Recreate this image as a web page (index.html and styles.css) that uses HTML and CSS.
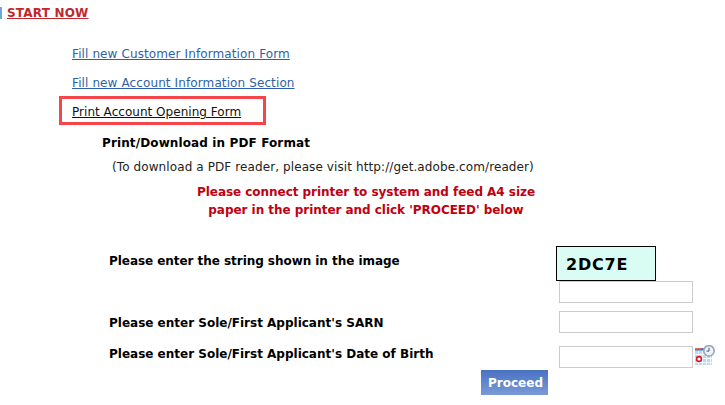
FILE: index.html
```html
<!DOCTYPE html>
<html lang="en">
<head>
<meta charset="utf-8">
<title>Start Now</title>
<link rel="stylesheet" href="styles.css">
</head>
<body>
<div class="page">
  <header class="head">
    <span class="head-mark"></span>
    <a class="start" href="#">START NOW</a>
  </header>
  <nav class="links">
    <a class="link" href="#">Fill new Customer Information Form</a>
    <a class="link" href="#">Fill new Account Information Section</a>
    <div class="current"><a class="link-current" href="#">Print Account Opening Form</a></div>
  </nav>
  <h2 class="title">Print/Download in PDF Format</h2>
  <p class="note">(To download a PDF reader, please visit http://get.adobe.com/reader)</p>
  <p class="warn">Please connect printer to system and feed A4 size<br>paper in the printer and click 'PROCEED' below</p>
  <form class="form">
    <div class="row row-captcha">
      <label class="label label-captcha">Please enter the string shown in the image</label>
      <div class="fields">
        <div class="captcha">2DC7E</div>
        <input class="input" type="text">
      </div>
    </div>
    <div class="row row-sarn">
      <label class="label">Please enter Sole/First Applicant's SARN</label>
      <input class="input" type="text">
    </div>
    <div class="row row-dob">
      <label class="label">Please enter Sole/First Applicant's Date of Birth</label>
      <div class="date">
        <input class="input" type="text">
        <svg class="cal" width="22" height="21" viewBox="0 0 22 21" aria-hidden="true">
          <rect x="1" y="3" width="17" height="17" fill="#bcd9f4"/>
          <rect x="1" y="3" width="17" height="2.5" fill="#4f7cc8"/>
          <rect x="1" y="3" width="6" height="1" fill="#d9735a"/>
          <path d="M1 9.5H18M1 13.5H18M1 17.5H18M4.5 6V20M8.5 6V20M12.5 6V20M16.5 6V20" stroke="#f2f7fd" stroke-width="1"/>
          <circle cx="5" cy="14" r="2.4" fill="#fff" stroke="#d8192c" stroke-width="1.6"/>
          <circle cx="15" cy="5.8" r="5.2" fill="#eef1f5" stroke="#98a6ba" stroke-width="1.6"/>
          <path d="M15 2.8V6.1H12.5" fill="none" stroke="#4b5668" stroke-width="1"/>
        </svg>
      </div>
    </div>
    <div class="actions"><button class="proceed" type="button">Proceed</button></div>
  </form>
</div>
</body>
</html>
```

FILE: styles.css
```css
html, body { margin: 0; padding: 0; background: #fff; }
body { font-family: "DejaVu Sans", Verdana, sans-serif; font-size: 12px; color: #111; }
.page { width: 725px; height: 405px; overflow: hidden; position: relative; }

.head { display: flex; align-items: center; gap: 5px; padding-top: 5px; height: 16px; }
.head-mark { width: 2px; height: 12px; background: #6fa8d0; }
.start { font-size: 12px; font-weight: bold; color: #c0272d; text-decoration: underline; letter-spacing: 0.2px; }

.links { display: flex; flex-direction: column; align-items: flex-start; margin: 26px 0 0 72px; }
.link { color: #2f5fa8; text-decoration: underline; line-height: 15px; margin-bottom: 14px; letter-spacing: 0.11px; }
.current { margin: -9px 0 0 -13px; border: 3px solid #f4464b; padding: 6px 0 2px 10px; height: 15px; width: 191px; line-height: 15px; white-space: nowrap; }
.link-current { color: #111; text-decoration: underline; letter-spacing: 0.03px; }

.title { margin: 11px 0 0 102px; font-size: 12px; line-height: 15px; font-weight: bold; color: #000; letter-spacing: 0.12px; }
.note { margin: 9px 0 0 112px; line-height: 15px; color: #222; letter-spacing: 0.1px; }
.warn { margin: 8px 0 0 186px; width: 360px; text-align: center; font-weight: bold; color: #c00010; line-height: 18px; letter-spacing: -0.04px; }

.form { margin: 0; }
.row { display: flex; justify-content: space-between; width: 693px; margin-left: 0; padding-left: 109px; box-sizing: border-box; }
.label { font-weight: bold; color: #000; line-height: 15px; }
.row-captcha { margin-top: 27px; }
.label-captcha { margin-top: 8px; letter-spacing: -0.05px; }
.fields { display: flex; flex-direction: column; align-items: flex-start; }
.captcha { box-sizing: border-box; margin-left: -3px; width: 100px; height: 35px; background: #d9fdf3; border: 1px solid #000; font-weight: bold; font-size: 16px; line-height: 36px; padding-left: 9px; letter-spacing: 0.8px; color: #000; }
.input { box-sizing: border-box; display: block; width: 134px; height: 22px; margin: 0; padding: 0 2px; border: 1px solid #ccc; background: #fff; }
.row-sarn { margin-top: 8px; align-items: flex-start; }
.row-sarn .label { margin-top: 5px; }
.row-dob { margin-top: 13px; align-items: flex-start; }
.row-dob .label { margin-top: 1px; }
.date { position: relative; }
.cal { position: absolute; left: 135px; top: -1px; }
.actions { margin: 2px 0 0 481px; }
.proceed { display: block; width: 67px; height: 25px; border: 0; padding: 0 0 0 2px; background: linear-gradient(#4a72c2, #7a9ad6); color: #fff; font-family: inherit; font-size: 12px; font-weight: bold; }
```
